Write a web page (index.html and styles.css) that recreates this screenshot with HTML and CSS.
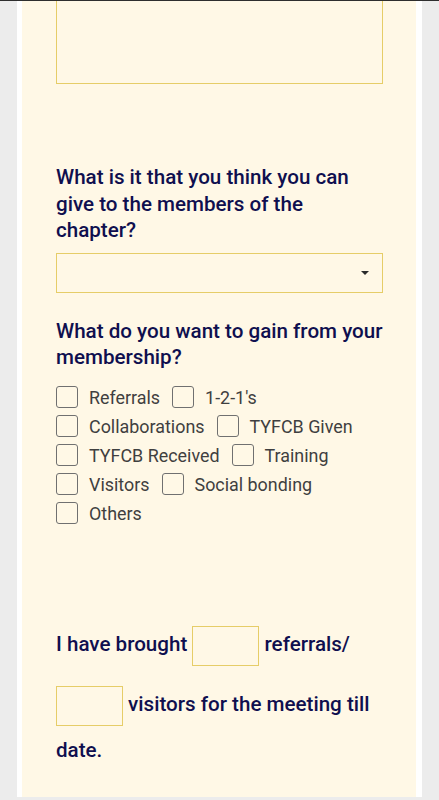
FILE: index.html
```html
<!DOCTYPE html>
<html lang="en">
<head>
  <meta charset="UTF-8" />
  <meta name="viewport" content="width=device-width, initial-scale=1.0" />
  <title>Membership form</title>
  <link rel="stylesheet" href="styles.css">
</head>
<body>
  <div class="topbar"></div>
  <div class="card">
    <form class="form">
      <textarea class="long-answer"></textarea>

      <label class="question q-give">What is it that you think you can give to the members of the chapter?</label>
      <div class="select"><span class="caret"></span></div>

      <label class="question q-gain">What do you want to gain from your membership?</label>
      <div class="options">
        <label class="option"><span class="box"></span>Referrals</label>
        <label class="option"><span class="box"></span>1-2-1's</label>
        <label class="option"><span class="box"></span>Collaborations</label>
        <label class="option"><span class="box"></span>TYFCB Given</label>
        <label class="option"><span class="box"></span>TYFCB Received</label>
        <label class="option"><span class="box"></span>Training</label>
        <label class="option"><span class="box"></span>Visitors</label>
        <label class="option"><span class="box"></span>Social bonding</label>
        <label class="option"><span class="box"></span>Others</label>
      </div>

      <p class="sentence">I have brought <input class="num" type="text" /> referrals/ <input class="num" type="text" /> visitors for the meeting till date.</p>
    </form>
  </div>
</body>
</html>
```

FILE: styles.css
```css
body {
  margin: 0;
  height: 800px;
  overflow: hidden;
  background: #ececec;
  font-family: Roboto, "Liberation Sans", sans-serif;
}
.topbar { height: 1px; background: #2e2e2e; }
.card {
  margin: 0 17px;
  padding: 0 6px 0 5px;
  height: 796px;
  background: #ffffff;
  overflow: hidden;
}
.form {
  display: flex;
  flex-direction: column;
  align-items: flex-start;
  height: 100%;
  padding: 0 33px 0 34px;
  background: #fff8e6;
}
.long-answer {
  display: block;
  box-sizing: border-box;
  width: 100%;
  height: 120px;
  margin: -37px 0 0;
  border: 1px solid #e6cd68;
  background: transparent;
  resize: none;
}
.question {
  display: block;
  color: #0f0f4f;
  font-size: 20.6px;
  font-weight: 500;
  line-height: 26.5px;
}
.q-give { margin-top: 80px; }
.q-gain { margin-top: 25px; }
.select {
  box-sizing: border-box;
  width: 100%;
  height: 40px;
  margin-top: 9px;
  display: flex;
  align-items: center;
  justify-content: flex-end;
  padding-right: 13px;
  border: 1px solid #e6cd68;
}
.caret {
  width: 0;
  height: 0;
  border-left: 4px solid transparent;
  border-right: 4px solid transparent;
  border-top: 4px solid #2a2a2a;
  margin-top: 1px;
}
.options {
  display: flex;
  flex-wrap: wrap;
  column-gap: 12px;
  margin-top: 12px;
}
.option {
  display: flex;
  align-items: center;
  height: 29px;
  color: #3f3f3f;
  font-size: 17.9px;
}
.box {
  box-sizing: border-box;
  width: 22px;
  height: 22px;
  margin-right: 11px;
  border: 1px solid #707070;
  border-radius: 3px;
}
.sentence {
  margin: 88px 0 0;
  color: #0f0f4f;
  font-size: 20.6px;
  font-weight: 500;
  line-height: 28px;
}
.num {
  box-sizing: border-box;
  width: 67px;
  height: 40px;
  margin: 10px 0;
  vertical-align: middle;
  border: 1px solid #e6cd68;
  background: transparent;
  font: inherit;
}
```
